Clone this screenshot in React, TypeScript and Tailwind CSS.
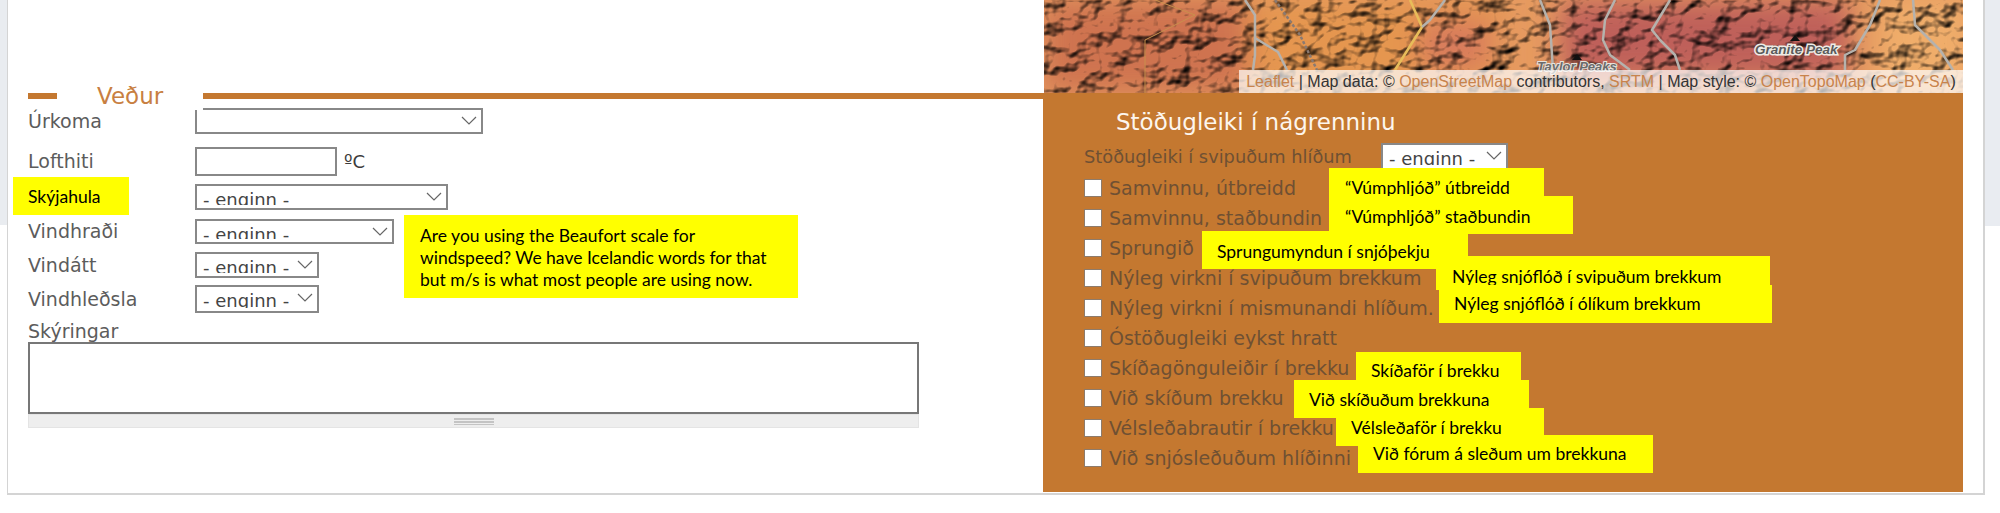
import React from "react";

function Chevron({ className }: { className: string }) {
  return (
    <svg className={className} width="16" height="9" viewBox="0 0 16 9" fill="none">
      <polyline points="1,1 8,8 15,1" stroke="#666" strokeWidth="1.2" />
    </svg>
  );
}

function Pick({ className, value = "- enginn -" }: { className: string; value?: string }) {
  return (
    <div className={"relative shrink-0 " + className}>
      <select className="block h-full w-full appearance-none rounded-none border-2 border-[#888888] bg-white pb-[3px] pl-[6px] font-['DejaVu_Sans',sans-serif] text-[18px] text-[#444444] outline-none">
        <option>{value}</option>
      </select>
      <Chevron className="pointer-events-none absolute right-[6px] top-[8px]" />
    </div>
  );
}

function Row({ label, className, children }: { label: string; className: string; children: React.ReactNode }) {
  return (
    <div className={"flex items-center " + className}>
      <label className="w-[167px] shrink-0 text-[19px] text-[#5c5c5c]">{label}</label>
      {children}
    </div>
  );
}

function Note({ className, children }: { className: string; children: React.ReactNode }) {
  return (
    <div className={"absolute whitespace-nowrap bg-[#ffff00] font-['Lato',sans-serif] text-[17.5px] leading-[22px] text-black " + className}>
      {children}
    </div>
  );
}

function Terrain() {
  const road = "#b5b2ad";
  return (
    <svg className="block" width="919" height="93" viewBox="1044 0 919 93">
      <defs>
        <filter id="hill" x="1044" y="0" width="919" height="93" filterUnits="userSpaceOnUse" colorInterpolationFilters="sRGB">
          <feTurbulence type="fractalNoise" baseFrequency="0.04 0.05" numOctaves="3" seed="23" result="n" />
          <feDiffuseLighting in="n" surfaceScale="8" diffuseConstant="1.32" lightingColor="#ffffff" result="l">
            <feDistantLight azimuth="235" elevation="48" />
          </feDiffuseLighting>
          <feGaussianBlur in="l" stdDeviation="0.6" result="b" />
          <feBlend in="SourceGraphic" in2="b" mode="multiply" />
        </filter>
        <filter id="soft" x="-20%" y="-60%" width="140%" height="220%">
          <feGaussianBlur stdDeviation="14" />
        </filter>
      </defs>
      <g filter="url(#hill)">
        <rect x="1044" y="0" width="919" height="93" fill="#e69a60" />
        <g filter="url(#soft)">
          <rect x="1044" y="0" width="205" height="93" fill="#cf7350" />
          <rect x="1250" y="0" width="250" height="93" fill="#e59650" />
          <rect x="1560" y="0" width="290" height="80" fill="#bf605a" />
          <rect x="1880" y="0" width="90" height="93" fill="#f0ad6a" />
          <rect x="1420" y="20" width="70" height="50" fill="#d87a5c" />
        </g>
      </g>
      <g fill="none" strokeWidth="2.5" strokeLinejoin="round">
        <path d="M1245 0 L1255 15 L1255 55 L1253 70" stroke={road} />
        <path d="M1255 38 L1278 52 L1287 70" stroke={road} />
        <path d="M1275 0 L1300 35 L1317 70" stroke="#8a7a72" strokeDasharray="3 2" />
        <path d="M1410 0 L1422 27 L1395 70" stroke="#e8bd5a" />
        <path d="M1445 0 L1430 20 L1422 27" stroke={road} />
        <path d="M1155 0 L1195 15 M1145 40 L1195 15 M1145 40 L1145 93" stroke="#c98f4d" strokeWidth="1" />
        <path d="M1540 0 L1550 25 L1553 70" stroke={road} />
        <path d="M1615 0 L1605 20 L1603 40 L1610 55 L1630 70" stroke={road} />
        <path d="M1670 0 L1652 30 L1660 40 L1675 55 L1680 70" stroke={road} />
        <path d="M1880 0 L1870 25 L1855 50 L1845 55 L1845 70" stroke={road} />
        <path d="M1913 0 L1915 25 L1940 50 L1953 70" stroke={road} />
      </g>
      <polygon points="1795,35 1790,41 1800,41" fill="#111" />
      <polygon points="1577,54 1572,60 1582,60" fill="#111" />
      <text x="1755" y="54" fontFamily="'Liberation Sans',sans-serif" fontSize="13.5" fontStyle="italic" fontWeight="700" fill="#5b5b5b" stroke="#eeebe5" strokeWidth="3" paintOrder="stroke">Granite Peak</text>
      <text x="1537" y="71" fontFamily="'Liberation Sans',sans-serif" fontSize="13" fontStyle="italic" fontWeight="700" fill="#6b6b6b" stroke="#e6e2dc" strokeWidth="2" paintOrder="stroke">Taylor Peaks</text>
    </svg>
  );
}

const stability = [
  "Samvinnu, útbreidd",
  "Samvinnu, staðbundin",
  "Sprungið",
  "Nýleg virkni í svipuðum brekkum",
  "Nýleg virkni í mismunandi hlíðum.",
  "Óstöðugleiki eykst hratt",
  "Skíðagönguleiðir í brekku",
  "Við skíðum brekku",
  "Vélsleðabrautir í brekku",
  "Við snjósleðuðum hlíðinni",
];

export default function App() {
  return (
    <div className="relative flex h-[513px] w-[2000px] overflow-hidden bg-white font-['DejaVu_Sans',sans-serif]">
      <div className="w-[7px] shrink-0">
        <div className="h-[225px] bg-[#e9ecf0]" />
      </div>
      <main className="flex h-[495px] w-[1978px] shrink-0 border-b-2 border-l border-r-2 border-[#d4d4d4] bg-white">
        <section className="w-[1035px] shrink-0 pl-[20px] pt-[93px]">
          <div className="flex h-[15px] items-start">
            <div className="h-[6px] w-[29px] bg-[#c47830]" />
            <h2 className="ml-[40px] w-[106px] -translate-y-[10px] text-[23px] leading-[26px] text-[#c87f42]">Veður</h2>
            <div className="h-[6px] flex-1 bg-[#c47830]" />
          </div>
          <Row label="Úrkoma" className="h-[26px]">
            <div className="relative">
              <Pick className="h-[26px] w-[288px]" value="" />
              <div className="absolute left-0 top-0 h-[2px] w-[8px] bg-white" />
            </div>
          </Row>
          <Row label="Lofthiti" className="mt-[13px] h-[29px]">
            <input className="h-[29px] w-[142px] border-2 border-[#888888] bg-white" />
            <span className="ml-[7px] text-[18px] text-[#3c3c3c]">ºC</span>
          </Row>
          <Row label="" className="mt-[8px] h-[26px]">
            <Pick className="h-[26px] w-[253px]" />
          </Row>
          <Row label="Vindhraði" className="mt-[9px] h-[25px]">
            <Pick className="h-[25px] w-[199px]" />
          </Row>
          <Row label="Vindátt" className="mt-[8px] h-[26px]">
            <Pick className="h-[26px] w-[124px]" />
          </Row>
          <Row label="Vindhleðsla" className="mt-[7px] h-[28px]">
            <Pick className="h-[28px] w-[124px]" />
          </Row>
          <label className="mt-[8px] block h-[21px] text-[19px] leading-[21px] text-[#5c5c5c]">Skýringar</label>
          <textarea className="block h-[72px] w-[891px] resize-none rounded-none border-2 border-[#777777] bg-white outline-none" />
          <div className="flex h-[14px] w-[891px] flex-col items-center justify-center gap-[1px] border border-[#e4e4e4] bg-[#eeeeee]">
            <div className="h-[2px] w-[40px] bg-[#c4c4c4]" />
            <div className="h-[2px] w-[40px] bg-[#c4c4c4]" />
            <div className="h-[1px] w-[40px] bg-[#c4c4c4]" />
          </div>
        </section>
        <aside className="w-[920px] shrink-0">
          <div className="relative h-[93px] pl-[1px]">
            <Terrain />
            <div className="absolute bottom-0 right-0 flex h-[23px] w-[724px] items-center justify-center whitespace-nowrap bg-white/70 font-['Liberation_Sans',sans-serif] text-[16px] text-[#333333]">
              <span className="text-[#c8834c]">Leaflet</span>&nbsp;| Map data: ©&nbsp;<span className="text-[#c8834c]">OpenStreetMap</span>&nbsp;contributors,&nbsp;<span className="text-[#c8834c]">SRTM</span>&nbsp;| Map style: ©&nbsp;<span className="text-[#c8834c]">OpenTopoMap</span>&nbsp;(<span className="text-[#c8834c]">CC-BY-SA</span>)
            </div>
          </div>
          <div className="h-[399px] bg-[#c47830] pl-[41px] pt-[14px]">
            <h3 className="ml-[32px] h-[30px] text-[23px] leading-[30px] text-[#fdf6ee]">Stöðugleiki í nágrenninu</h3>
            <div className="mt-[6px] flex h-[30px] items-start">
              <span className="w-[297px] shrink-0 whitespace-nowrap text-[17.8px] leading-[28px] text-[#6f5033]">Stöðugleiki í svipuðum hlíðum</span>
              <Pick className="h-[27px] w-[127px]" />
            </div>
            <ul>
              {stability.map((s) => (
                <li key={s} className="flex h-[30px] items-center">
                  <input type="checkbox" className="h-[18px] w-[18px] shrink-0 appearance-none border border-[#8d7b6b] bg-white" />
                  <span className="ml-[7px] text-[19px] text-[#6f5033]">{s}</span>
                </li>
              ))}
            </ul>
          </div>
        </aside>
      </main>
      <div className="w-[15px] shrink-0">
        <div className="h-[226px] bg-[#e9ecf1]" />
      </div>

      <Note className="left-[13px] top-[177px] h-[38px] w-[116px] pl-[15px] pt-[9px]">Skýjahula</Note>
      <Note className="left-[404px] top-[215px] h-[83px] w-[394px] pl-[16px] pt-[10px]">
        Are you using the Beaufort scale for<br />windspeed? We have Icelandic words for that<br />but m/s is what most people are using now.
      </Note>
      <Note className="left-[1329px] top-[168px] h-[28px] w-[215px] pl-[16px] pt-[9px]">“Vúmphljóð” útbreidd</Note>
      <Note className="left-[1329px] top-[196px] h-[38px] w-[244px] pl-[16px] pt-[10px]">“Vúmphljóð” staðbundin</Note>
      <Note className="left-[1202px] top-[231px] h-[38px] w-[266px] pl-[15px] pt-[10px]">Sprungumyndun í snjóþekju</Note>
      <Note className="left-[1436px] top-[256px] h-[34px] w-[334px] pl-[16px] pt-[10px]">Nýleg snjóflóð í svipuðum brekkum</Note>
      <Note className="left-[1439px] top-[285px] h-[38px] w-[333px] pl-[15px] pt-[8px]">Nýleg snjóflóð í ólíkum brekkum</Note>
      <Note className="left-[1356px] top-[352px] h-[28px] w-[165px] pl-[15px] pt-[8px]">Skíðaför í brekku</Note>
      <Note className="left-[1294px] top-[380px] h-[38px] w-[235px] pl-[15px] pt-[9px]">Við skíðuðum brekkuna</Note>
      <Note className="left-[1336px] top-[408px] h-[38px] w-[208px] pl-[15px] pt-[9px]">Vélsleðaför í brekku</Note>
      <Note className="left-[1358px] top-[435px] h-[38px] w-[295px] pl-[15px] pt-[8px]">Við fórum á sleðum um brekkuna</Note>
    </div>
  );
}
